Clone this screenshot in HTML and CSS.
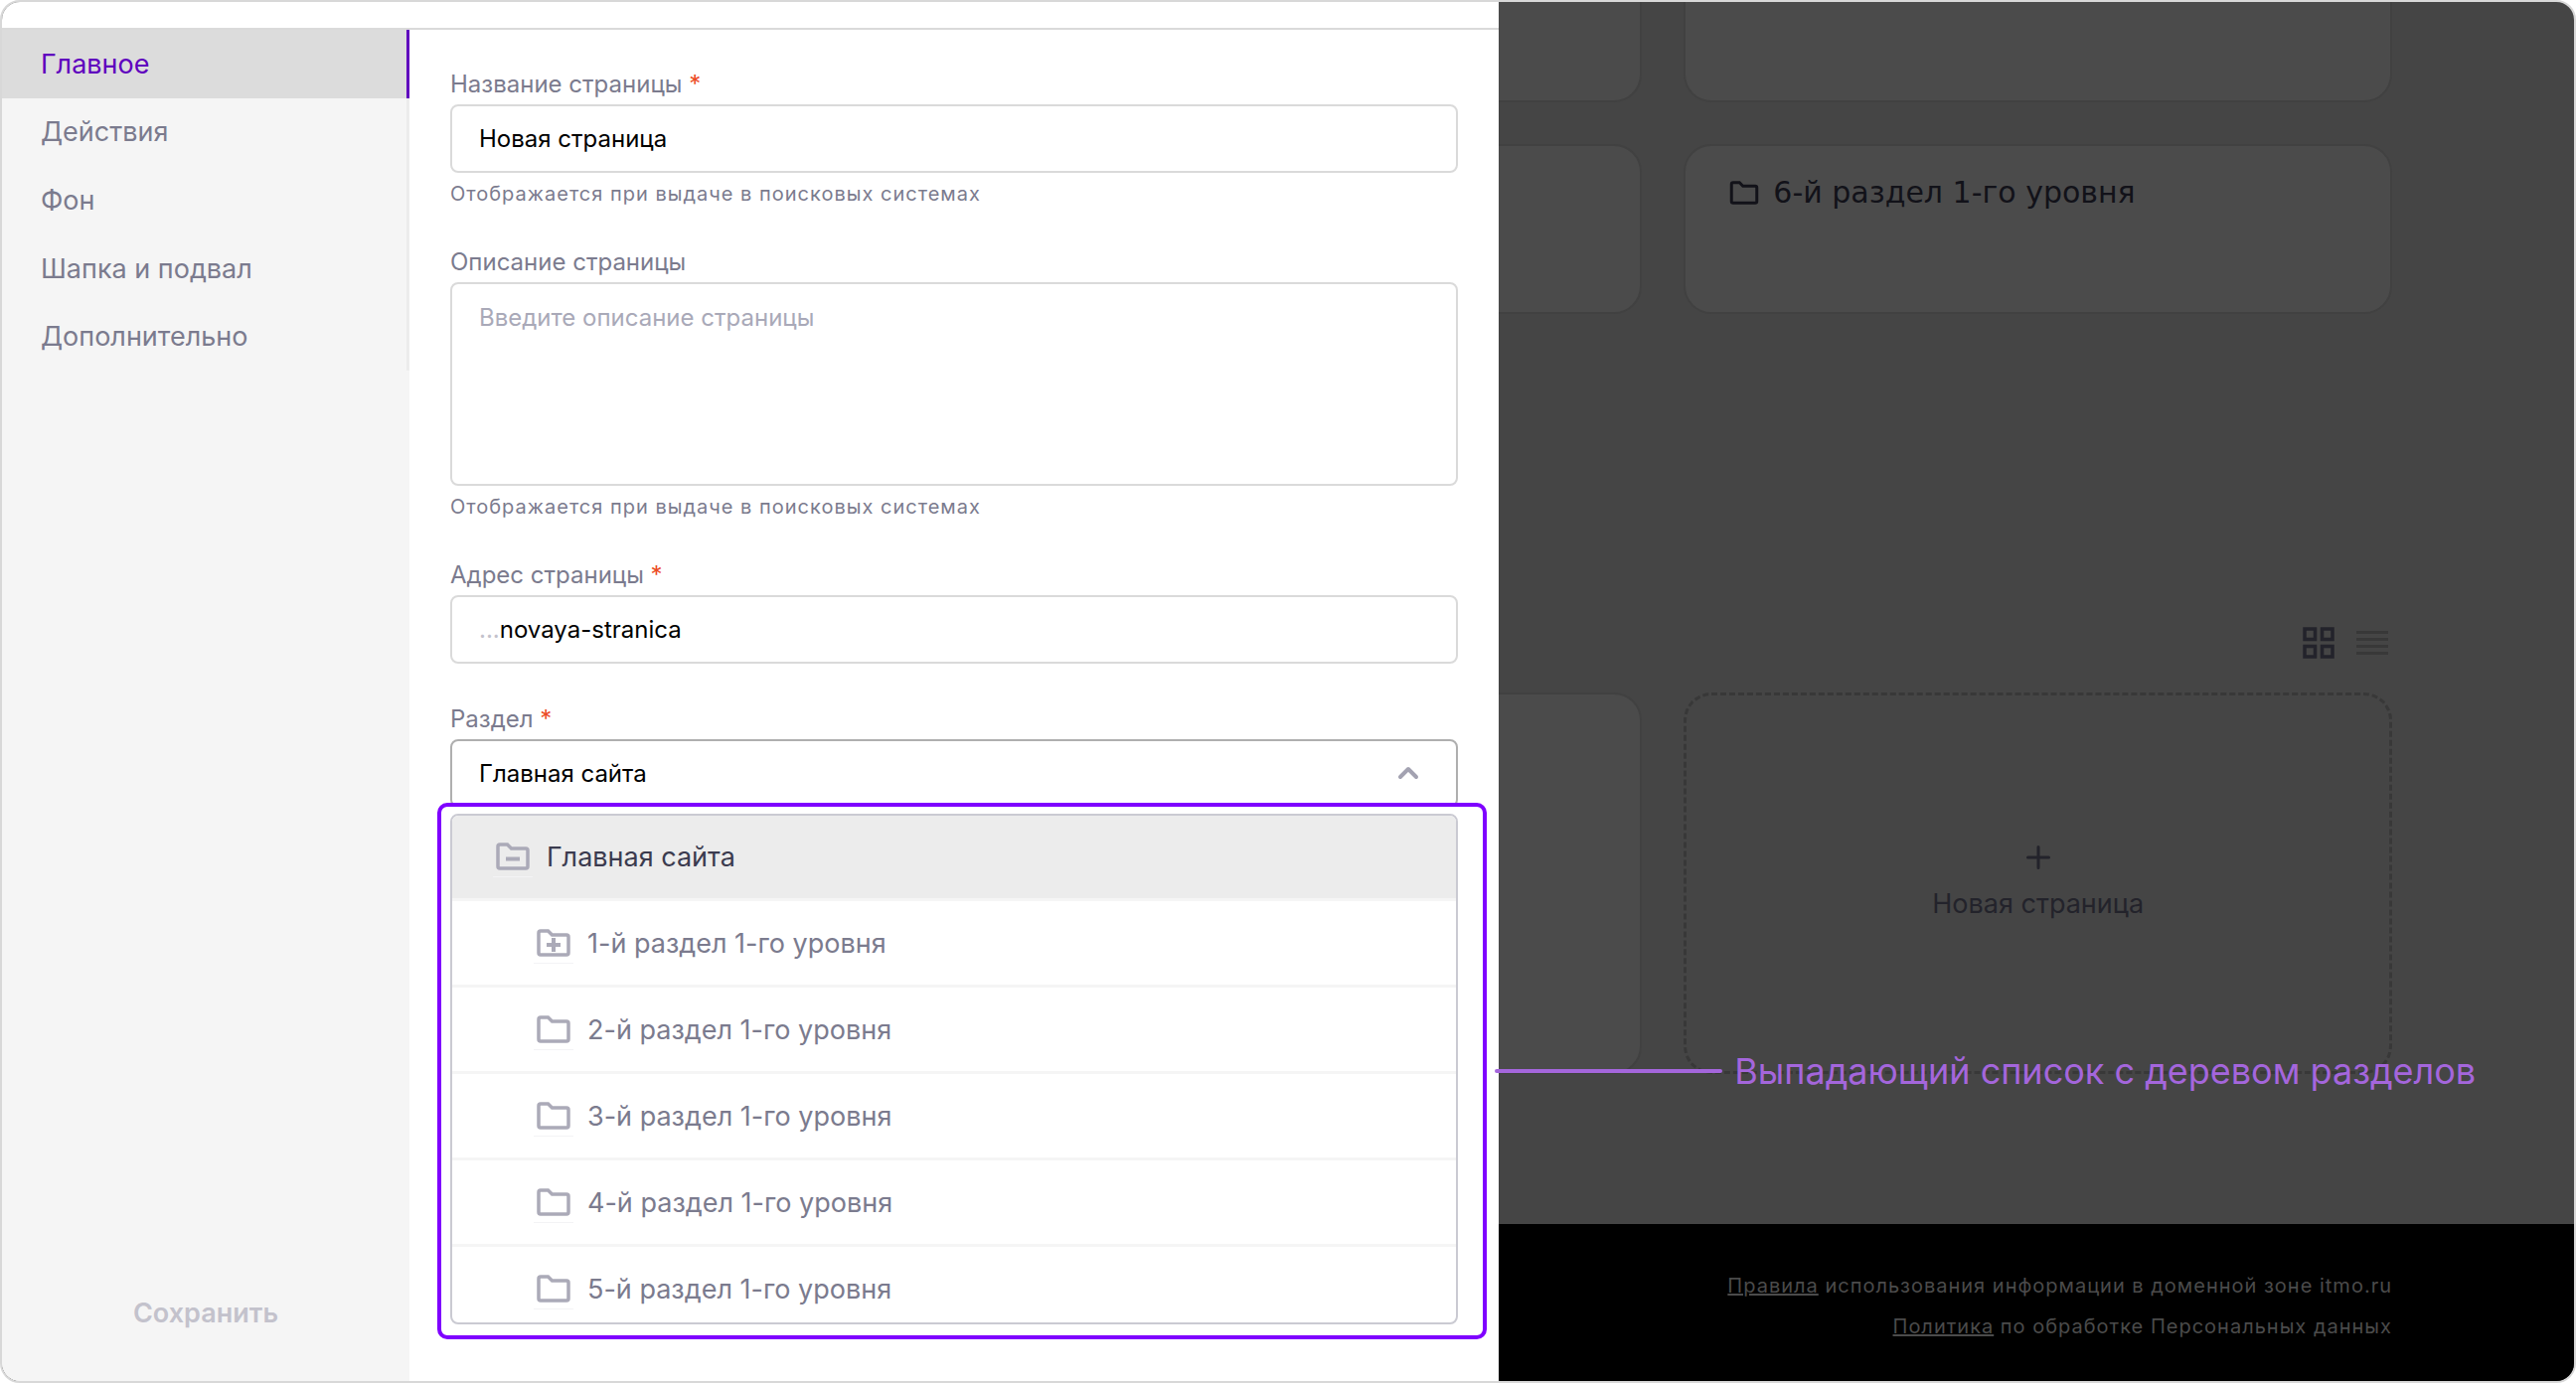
FILE: index.html
```
<!DOCTYPE html>
<html lang="ru">
<head>
    <meta charset="UTF-8">
    <title>Новая страница</title>
    <link rel="stylesheet" href="styles.css">
</head>
<body>
<svg class="sprite" aria-hidden="true">
    <symbol id="folder" viewBox="0 0 40 40">
        <path d="M7 8h7.500l4 4H33q2 0 2 2v16q0 2-2 2H7q-2 0-2-2V10q0-2 2-2z" fill="none" stroke="currentColor" stroke-width="3.500"/>
    </symbol>
</svg>
<div class="frame">
    <!-- страница сайта под затемнением -->
    <main class="site">
        <div class="cards sections">
            <div class="card cut"></div>
            <div class="card cut"></div>
            <div class="card cut"></div>
            <div class="card"></div>
            <div class="card"></div>
            <div class="card">
                <svg class="card-icon"><use href="#folder"/></svg>
                <span>6-й раздел 1-го уровня</span>
            </div>
        </div>
        <div class="views">
            <button type="button" aria-label="Плитка">
                <svg width="32" height="32" viewBox="0 0 32 32" fill="none" stroke="currentColor" stroke-width="3.500">
                    <path d="M2 2h10.500v10.500H2zM19.500 2H30v10.500H19.500zM2 19.500h10.500V30H2zM19.500 19.500H30V30H19.500z"/>
                </svg>
            </button>
            <button type="button" class="off" aria-label="Список">
                <svg width="32" height="32" viewBox="0 0 32 32" fill="none" stroke="currentColor" stroke-width="3">
                    <path d="M0 5.500h32M0 12.500h32M0 19.500h32M0 26.500h32"/>
                </svg>
            </button>
        </div>
        <div class="cards pages">
            <div class="card"></div>
            <div class="card"></div>
            <button type="button" class="add">
                <svg width="24" height="24" viewBox="0 0 24 24" stroke="currentColor" stroke-width="3" stroke-linecap="round">
                    <path d="M12 1.500v21M1.500 12h21"/>
                </svg>
                Новая страница
            </button>
        </div>
    </main>
    <footer class="footer">
        <p><a href="#">Правила</a> использования информации в доменной зоне itmo.ru</p>
        <p><a href="#">Политика</a> по обработке Персональных данных</p>
    </footer>

    <!-- панель настроек -->
    <div class="drawer">
        <aside class="side">
            <nav class="menu">
                <a href="#" class="active">Главное</a>
                <a href="#">Действия</a>
                <a href="#">Фон</a>
                <a href="#">Шапка и подвал</a>
                <a href="#">Дополнительно</a>
            </nav>
            <button type="submit" form="settings" class="save" disabled>Сохранить</button>
        </aside>
        <form id="settings" class="form">
            <div class="field">
                <label for="title">Название страницы <span class="req">*</span></label>
                <input id="title" class="control" type="text" value="Новая страница">
                <small>Отображается при выдаче в поисковых системах</small>
            </div>
            <div class="field">
                <label for="desc">Описание страницы</label>
                <textarea id="desc" class="control" placeholder="Введите описание страницы"></textarea>
                <small>Отображается при выдаче в поисковых системах</small>
            </div>
            <div class="field">
                <label for="url">Адрес страницы <span class="req">*</span></label>
                <div class="control url">
                    <span>...</span><input id="url" type="text" value="novaya-stranica">
                </div>
            </div>
            <div class="field">
                <label for="section">Раздел <span class="req">*</span></label>
                <div class="select">
                    <select id="section" class="control">
                        <option>Главная сайта</option>
                    </select>
                    <svg class="arrow" width="22" height="14" viewBox="0 0 22 14" fill="none" stroke="#a3a2b1" stroke-width="4" stroke-linecap="round" stroke-linejoin="round">
                        <path d="M3 11l8-8 8 8"/>
                    </svg>
                    <div class="highlight">
                        <ul class="tree">
                            <li><button type="button" class="row root">
                                <svg class="icon"><use href="#folder"/><path d="M13 22.500h14" stroke="currentColor" stroke-width="4"/></svg>
                                Главная сайта
                            </button></li>
                            <li><button type="button" class="row">
                                <svg class="icon"><use href="#folder"/><path d="M13 22h14M20 15v14" stroke="currentColor" stroke-width="4"/></svg>
                                1-й раздел 1-го уровня
                            </button></li>
                            <li><button type="button" class="row"><svg class="icon"><use href="#folder"/></svg>2-й раздел 1-го уровня</button></li>
                            <li><button type="button" class="row"><svg class="icon"><use href="#folder"/></svg>3-й раздел 1-го уровня</button></li>
                            <li><button type="button" class="row"><svg class="icon"><use href="#folder"/></svg>4-й раздел 1-го уровня</button></li>
                            <li><button type="button" class="row"><svg class="icon"><use href="#folder"/></svg>5-й раздел 1-го уровня</button></li>
                        </ul>
                        <div class="callout"><i></i>Выпадающий список с деревом разделов</div>
                    </div>
                </div>
            </div>
        </form>
    </div>
</div>
</body>
</html>
```
FILE: styles.css
```
*{
    box-sizing: border-box;
}
body{
    margin: 0;
    background: #fff;
    font-family: Inter, "Noto Sans", sans-serif;
    font-size: 27px;
    color: #7b7b8e;
}
button, input, select, textarea{
    font: inherit;
    color: inherit;
    border: 0;
    padding: 0;
    background: none;
    outline: none;
}
.sprite{
    display: none;
}
.frame{
    position: relative;
    display: flex;
    flex-direction: column;
    min-height: 100vh;
    border: 2px solid #d8d8d8;
    border-radius: 20px;
    overflow: hidden;
    background: #454545;
}

/* сайт */
.site{
    flex: 1;
    padding: 0 183px;
    color: #23232b;
}
.cards{
    display: grid;
    grid-template-columns: repeat(3, 1fr);
    gap: 42px;
}
.card{
    display: flex;
    align-items: flex-start;
    gap: 12px;
    padding: 30px 42px;
    background: #4b4b4b;
    border: 2px solid #414141;
    border-radius: 28px;
}
.sections{
    grid-template-rows: 101px 171px;
}
.sections .card{
    font-family: "DejaVu Sans", sans-serif;
    font-size: 30px;
    line-height: 34px;
    color: #121219;
}
.sections .cut{
    border-top: 0;
    border-radius: 0 0 28px 28px;
}
.card-icon{
    width: 34px;
    height: 34px;
}
.views{
    display: flex;
    justify-content: flex-end;
    gap: 22px;
    padding: 315px 4px 34px;
}
.views svg{
    display: block;
}
.views .off{
    color: #383838;
}
.pages{
    grid-template-rows: 384px;
}
.add{
    display: flex;
    flex-direction: column;
    align-items: center;
    justify-content: center;
    gap: 18px;
    line-height: 34px;
    border: 3px dashed #383838;
    border-radius: 28px;
}
.footer{
    height: 158px;
    padding: 42px 183px 0;
    background: #000;
    color: #4b4b4b;
    font-size: 20px;
    line-height: 41px;
    letter-spacing: 1px;
    text-align: right;
}
.footer p{
    margin: 0;
}
.footer a{
    color: inherit;
}

/* панель */
.drawer{
    position: absolute;
    top: 0;
    bottom: 0;
    left: 0;
    display: flex;
    width: 58.2%;
    padding-top: 26px;
    background: #fff;
}
.side{
    display: flex;
    flex-direction: column;
    justify-content: space-between;
    width: 410px;
    border-top: 2px solid #dadada;
    background: #f5f5f5;
}
.menu{
    display: grid;
    grid-auto-rows: 1fr;
    height: 343px;
}
.menu a{
    display: flex;
    align-items: center;
    padding-left: 39px;
    border-right: 3px solid #ececec;
    color: inherit;
    text-decoration: none;
}
.menu .active{
    background: #dcdcdc;
    border-color: #5f00be;
    color: #5f00be;
}
.save{
    height: 68px;
    margin-bottom: 35px;
    font-weight: 600;
    color: #c3c2cc;
}
.form{
    flex: 1;
    display: flex;
    flex-direction: column;
    gap: 41px;
    padding: 40px 41px 0;
    border-top: 2px solid #dadada;
    font-size: 24px;
}
.field{
    display: flex;
    flex-direction: column;
}
.field label{
    margin-bottom: 5px;
    line-height: 30px;
}
.req{
    color: #ec4a23;
}
.field small{
    margin-top: 9px;
    font-size: 20px;
    line-height: 25px;
    letter-spacing: 1px;
}
.control{
    width: 100%;
    height: 69px;
    padding: 0 27px;
    border: 2px solid #dadada;
    border-radius: 8px;
    background: #fff;
    color: #000;
}
textarea.control{
    height: 205px;
    padding-top: 19px;
    line-height: 30px;
    resize: none;
}
textarea::placeholder{
    color: #a9a9b8;
}
.url{
    display: flex;
    align-items: center;
}
.url span{
    color: #c3c2cc;
}
.url input{
    flex: 1;
}
.select{
    position: relative;
}
select.control{
    display: block;
    appearance: none;
    border-color: #afafaf;
}
.arrow{
    position: absolute;
    top: 27px;
    right: 39px;
}

/* дерево разделов */
.highlight{
    position: absolute;
    top: 64px;
    left: -13px;
    right: -29px;
    padding: 7px 25px 11px 9px;
    border: 4px solid #7f00ff;
    border-radius: 10px;
    background: #fff;
}
.tree{
    height: 514px;
    margin: 0;
    padding: 0;
    overflow: hidden;
    list-style: none;
    border: 2px solid #cacad2;
    border-radius: 8px;
}
.row{
    display: flex;
    align-items: center;
    gap: 14px;
    width: 100%;
    height: 87px;
    padding-left: 82px;
    border-bottom: 3px solid #f5f5f5;
    font-size: 27px;
}
.root{
    height: 86px;
    padding-left: 41px;
    background: #ececec;
    color: #3b3b4f;
}
.icon{
    width: 40px;
    height: 41px;
    border-bottom: 1px solid #f3f3f5;
    color: #abaab8;
}
.callout{
    position: absolute;
    top: 50%;
    left: 100%;
    display: flex;
    align-items: center;
    gap: 12px;
    margin-left: 12px;
    transform: translateY(-50%);
    font-size: 36px;
    white-space: nowrap;
    color: #a466dc;
}
.callout i{
    width: 229px;
    height: 4px;
    border-radius: 2px;
    background: #a466dc;
}
```
